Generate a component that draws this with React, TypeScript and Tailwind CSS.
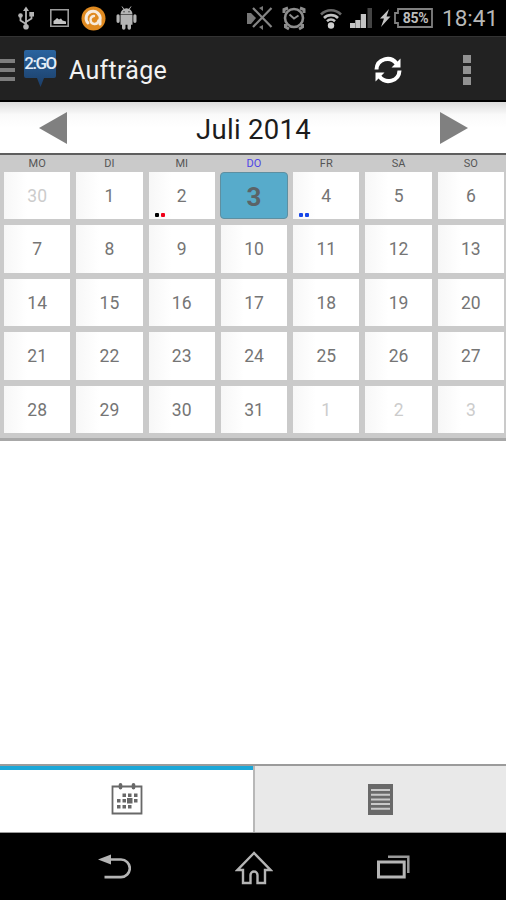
import React from 'react';
import clsx from 'clsx';

interface Day {
  label: string;
  muted?: boolean;
  selected?: boolean;
  dots?: string[];
}

const WEEKDAYS = ['MO', 'DI', 'MI', 'DO', 'FR', 'SA', 'SO'];

const DAYS: Day[] = [
  { label: '30', muted: true },
  ...Array.from({ length: 31 }, (_, i): Day => ({
    label: String(i + 1),
    selected: i + 1 === 3,
    dots: i + 1 === 2 ? ['bg-black', 'bg-[#f00018]'] : i + 1 === 4 ? ['bg-[#1747e8]', 'bg-[#1747e8]'] : undefined,
  })),
  { label: '1', muted: true },
  { label: '2', muted: true },
  { label: '3', muted: true },
];

const StatusBar: React.FC = () => (
  <div className="flex h-9 shrink-0 items-center bg-black text-[#b4b4b4]">
    {/* USB */}
    <svg className="ml-[18px] shrink-0" width="16" height="24" viewBox="0 0 16 24" fill="none" stroke="currentColor" strokeWidth="1.800">
      <path d="M8 4v16M8 18l-5.500-3.500V10M8 16l5.500-3.500V8.500" />
      <path d="M8 .5l3 4.500H5z" fill="currentColor" stroke="none" />
      <circle cx="8" cy="20.800" r="2.800" fill="currentColor" stroke="none" />
      <circle cx="2.500" cy="9.500" r="2.300" fill="currentColor" stroke="none" />
      <path d="M11.300 6H16v4.500h-4.700z" fill="currentColor" stroke="none" />
    </svg>
    {/* Screenshot */}
    <svg className="ml-4 shrink-0" width="19" height="18" viewBox="0 0 19 18" fill="none" stroke="#9c9c9c" strokeWidth="1.600">
      <path d="M.8.800h17.400v16.400H.8z" />
      <path d="M3.500 15v-3l2-1.500 1.500-1.500 2 1.500 2-1 1.500 2 3.500 1v2.500z" fill="#c4c4c4" stroke="none" />
    </svg>
    {/* Antivirus */}
    <svg className="ml-[11.500px] shrink-0" width="25" height="25" viewBox="0 0 25 25" fill="none">
      <circle cx="12.500" cy="12.500" r="12" fill="#e08a20" />
      <path d="M7 17A7 7 0 1 1 19 13.500V18" stroke="#f7eadb" strokeWidth="3" strokeLinecap="round" />
      <path d="M17.500 14.500a4 4 0 1 1-4.500-4.500" stroke="#f7eadb" strokeWidth="2.400" strokeLinecap="round" />
    </svg>
    {/* Android */}
    <svg className="ml-[10.500px] shrink-0" width="21" height="24" viewBox="0 0 21 24" fill="currentColor">
      <path d="M4.500 8.300a6 6 0 0 1 12 0zM4.500 8.800h12v10h-12zM.5 9.800a1.600 1.600 0 0 1 3.200 0v5.500a1.600 1.600 0 0 1-3.200 0zM17.300 9.800a1.600 1.600 0 0 1 3.200 0v5.500a1.600 1.600 0 0 1-3.200 0zM6 18h3.500v4A1.700 1.700 0 0 1 6 22zM11.500 18H15v4a1.700 1.700 0 0 1-3.500 0z" />
      <path d="M6 .5l2 3M15 .5l-2 3" stroke="currentColor" />
      <circle cx="8" cy="5.800" r=".7" fill="#333" />
      <circle cx="13" cy="5.800" r=".7" fill="#333" />
    </svg>

    {/* Muted */}
    <svg className="ml-auto shrink-0" width="26" height="26" viewBox="0 0 26 26" fill="#777" stroke="#858585">
      <path d="M0 8h4l5 5-5 6H0zM12 3l4-2v5zM12 22l4 3v-5z" stroke="none" />
      <path d="M6 3l18.500 19M24.500 3L6 22" strokeWidth="2.200" />
    </svg>
    {/* Alarm */}
    <svg className="ml-[9px] shrink-0" width="24" height="26" viewBox="0 0 24 26" fill="none" stroke="#8e8e8e" strokeWidth="2.600">
      <circle cx="12" cy="13" r="9" />
      <path d="M2 8V4.500L6 3M22 8V4.500L18 3M3.500 19v3l3.500 2M20.500 19v3L17 24" strokeWidth="3" />
      <path d="M7.500 9.500L12 13.500l4.500-3" strokeWidth="1.900" />
    </svg>
    {/* Wi-Fi */}
    <svg className="ml-[14px] shrink-0" width="22" height="22" viewBox="0 0 22 22" fill="none" strokeWidth="2.600">
      <path d="M1 7.500a14 14 0 0 1 20 0" stroke="#686868" />
      <path d="M4 11a10 10 0 0 1 14 0" stroke="#c2c2c2" />
      <path d="M7 14.200a6 6 0 0 1 8 0" stroke="#c2c2c2" />
      <circle cx="11" cy="18.500" r="3.200" fill="#d0d0d0" />
    </svg>
    {/* Signal */}
    <svg className="ml-2 shrink-0" width="23" height="20" viewBox="0 0 23 20" fill="#c4c4c4">
      <path d="M0 15h5v5H0zM5.300 12h5v8h-5zM10.800 6h5.200v14h-5.200z" />
      <path d="M17.500 0H22v20h-4.500z" fill="#444" />
    </svg>
    {/* Battery */}
    <svg className="ml-[7px] shrink-0" width="11" height="18" viewBox="0 0 11 18" fill="#c4c4c4">
      <path d="M9 0L0 9.500h4L1 18l9.500-10.500h-4z" />
    </svg>
    <div className="relative ml-[3px] flex h-5 w-[39px] shrink-0 items-center justify-center">
      <svg className="absolute inset-0" width="39" height="20" viewBox="0 0 39 20" fill="none" stroke="#808080" strokeWidth="1.800">
        <path d="M4 1h34v18H4v-4H1V5h3z" />
      </svg>
      <span className="relative ml-1 text-[14px] leading-none font-bold tracking-[-0.300px] text-[#bdbdbd]">85%</span>
    </div>
    <span className="mr-[9px] ml-[9px] w-[55px] text-[22.500px] leading-none whitespace-nowrap text-[#b8b8b8]">18:41</span>
  </div>
);

const ActionBar: React.FC = () => (
  <div className="flex h-[66px] shrink-0 items-center border-t border-b-2 border-t-[#333] border-b-black bg-[#222]">
    {/* Drawer handle */}
    <div className="flex w-[15px] shrink-0 flex-col gap-[5px] pt-[3px]">
      <span className="h-[4px] bg-[#7d7d7d]" />
      <span className="h-[4px] bg-[#7d7d7d]" />
      <span className="h-[4px] bg-[#7d7d7d]" />
    </div>
    <div className="relative ml-[9px] h-[37px] w-8 shrink-0">
      <svg className="absolute inset-0" width="32" height="37" viewBox="0 0 32 37">
        <defs>
          <linearGradient id="logo" x1="0" y1="0" x2="0" y2="1">
            <stop offset="0" stopColor="#2a649f" />
            <stop offset="1" stopColor="#1c3e68" />
          </linearGradient>
        </defs>
        <path d="M2 0h28q2 0 2 2v24q0 2-2 2H20l-3.500 9L13 28H2q-2 0-2-2V2q0-2 2-2z" fill="url(#logo)" />
      </svg>
      <span className="relative flex h-[28px] items-center justify-center text-[17px] font-medium tracking-[-1.500px] text-[#e4edf7]">2:GO</span>
    </div>
    <h1 className="ml-[13px] pt-1 text-[25px] leading-none tracking-[0.300px] text-[#f2f2f2]">Aufträge</h1>
    {/* Refresh */}
    <svg className="mt-0.5 ml-auto shrink-0" width="28" height="28" viewBox="0 0 28 28" fill="none" stroke="#fff" strokeWidth="4">
      <path d="M2.500 13.500C3 2.500 16.500-.5 22.500 7.500M25.500 14.500C25 25.500 11.500 28.500 5.500 20.500" />
      <path d="M26.500 2.500v9h-9zM1.500 25.500v-9h9z" fill="#fff" stroke="none" />
    </svg>
    {/* Overflow */}
    <div className="mt-0.5 mr-[35px] ml-[61px] flex w-2 shrink-0 flex-col gap-[3px]">
      <span className="h-2 bg-[#929292]" />
      <span className="h-2 bg-[#929292]" />
      <span className="h-2 bg-[#929292]" />
    </div>
  </div>
);

const MonthHeader: React.FC = () => (
  <div className="flex h-[53px] shrink-0 items-center justify-between border-b-2 border-[#5e5e5e] bg-linear-to-b from-[#dcdcdc] via-[#fafafa] via-25% to-white to-50% pr-[38px] pl-[39px]">
    <svg width="28" height="32" viewBox="0 0 28 32" fill="#808080">
      <path d="M28 0v32L0 16z" />
    </svg>
    <h2 className="pt-1 text-[27.500px] leading-none tracking-[0.300px] text-[#1c1c1c]">Juli 2014</h2>
    <svg width="28" height="32" viewBox="0 0 28 32" fill="#808080">
      <path d="M0 0v32l28-16z" />
    </svg>
  </div>
);

const DayCell: React.FC<{ day: Day }> = ({ day }) => (
  <div
    className={clsx(
      'relative flex items-center justify-center',
      day.selected
        ? '-mx-px rounded-[4px] border border-[#5e8fa1] bg-[#57abcb] text-[26px] font-bold text-[#5b6367]'
        : 'bg-linear-to-r from-[#f7f7f7] to-white to-35% text-[17.500px]',
      !day.selected && (day.muted ? 'text-[#cccccc]' : 'text-[#757575]')
    )}
  >
    <span className="pt-0.5 leading-none">{day.label}</span>
    {day.dots && (
      <span className="absolute bottom-[2px] left-[6px] flex gap-0.5">
        {day.dots.map((dot, i) => (
          <span key={i} className={clsx('size-1 rounded-[1px]', dot)} />
        ))}
      </span>
    )}
  </div>
);

const Calendar: React.FC = () => (
  <div className="flex h-[286px] shrink-0 flex-col border-b-[3px] border-[#a8a8a8] bg-[#cacaca] pr-[2px] pl-1">
    <div className="grid h-[17px] shrink-0 grid-cols-7 gap-x-1.5">
      {WEEKDAYS.map((name) => (
        <span key={name} className={clsx('pt-[3px] text-center text-[11px] leading-none', name === 'DO' ? 'text-[#4f45e8]' : 'text-[#555]')}>
          {name}
        </span>
      ))}
    </div>
    <div className="grid h-[261px] grid-cols-7 grid-rows-5 gap-1.5">
      {DAYS.map((day, i) => (
        <DayCell key={i} day={day} />
      ))}
    </div>
  </div>
);

const TabBar: React.FC = () => (
  <div className="flex h-[69px] shrink-0 border-t-2 border-b border-[#9b9b9b]">
    <div className="flex w-[253px] items-center justify-center border-t-4 border-[#1ba7d8] bg-white">
      <svg className="-mt-1" width="32" height="32" viewBox="0 0 32 32" fill="none" stroke="#686868" strokeWidth="1.800">
        <path d="M1.500 3.500h29v27h-29z" />
        <path d="M9.500 1.800v3M22.500 1.800v3" strokeWidth="3.600" strokeLinecap="round" />
        <path
          d="M11.500 10.500H15v3.500h-3.500zM17 10.500h3.500v3.500H17zM23 10.500h3.500v3.500H23zM6 16h3.500v3.500H6zM11.500 16H15v3.500h-3.500zM16 15h5.500v5.500H16zM23 16h3.500v3.500H23zM6 22h3.500v3.500H6zM11.500 22H15v3.500h-3.500zM17 22h3.500v3.500H17z"
          fill="#686868"
          stroke="none"
        />
      </svg>
    </div>
    <div className="flex flex-1 items-center justify-center border-l-2 border-[#b8b8b8] bg-[#e9e9e9]">
      <svg width="25" height="31" viewBox="0 0 25 31">
        <path d="M0 0h25v31H0z" fill="#696969" />
        <path d="M3 6h19M3 10.700h19M3 15.400h19M3 20.100h19M3 24.800h19" stroke="#c9c9c9" strokeWidth="2" />
      </svg>
    </div>
  </div>
);

const NavBar: React.FC = () => (
  <div className="flex h-[67px] shrink-0 items-center justify-between bg-black pr-24 pl-[98px]">
    <svg className="mt-px" width="33" height="26" viewBox="0 0 33 26" fill="none" stroke="#b5b5b5" strokeWidth="2.600">
      <path d="M10 5.500h13a8.800 8.800 0 0 1 0 17.600H6.500" />
      <path d="M0 5.500L13 .5v10z" fill="#b5b5b5" stroke="none" />
    </svg>
    <svg className="mt-0.5" width="38" height="34" viewBox="0 0 38 34" fill="none" stroke="#b5b5b5" strokeWidth="2.400">
      <path d="M19 2L2.500 19H8v13h7.500v-8a3.500 3.500 0 0 1 7 0v8H30V19h5.500z" />
    </svg>
    <svg width="33" height="24" viewBox="0 0 33 24" fill="none" stroke="#b5b5b5">
      <path d="M1.500 7h25.700v15H1.500z" strokeWidth="3" />
      <path d="M11 1.800h20.300V18" strokeWidth="2.500" stroke="#999" />
    </svg>
  </div>
);

const App: React.FC = () => {
  return (
    <div className="flex h-[900px] w-[506px] flex-col overflow-hidden bg-white font-['Roboto',sans-serif]">
      <StatusBar />
      <ActionBar />
      <MonthHeader />
      <Calendar />
      <div className="flex-1 bg-white" />
      <TabBar />
      <NavBar />
    </div>
  );
};

export default App;
